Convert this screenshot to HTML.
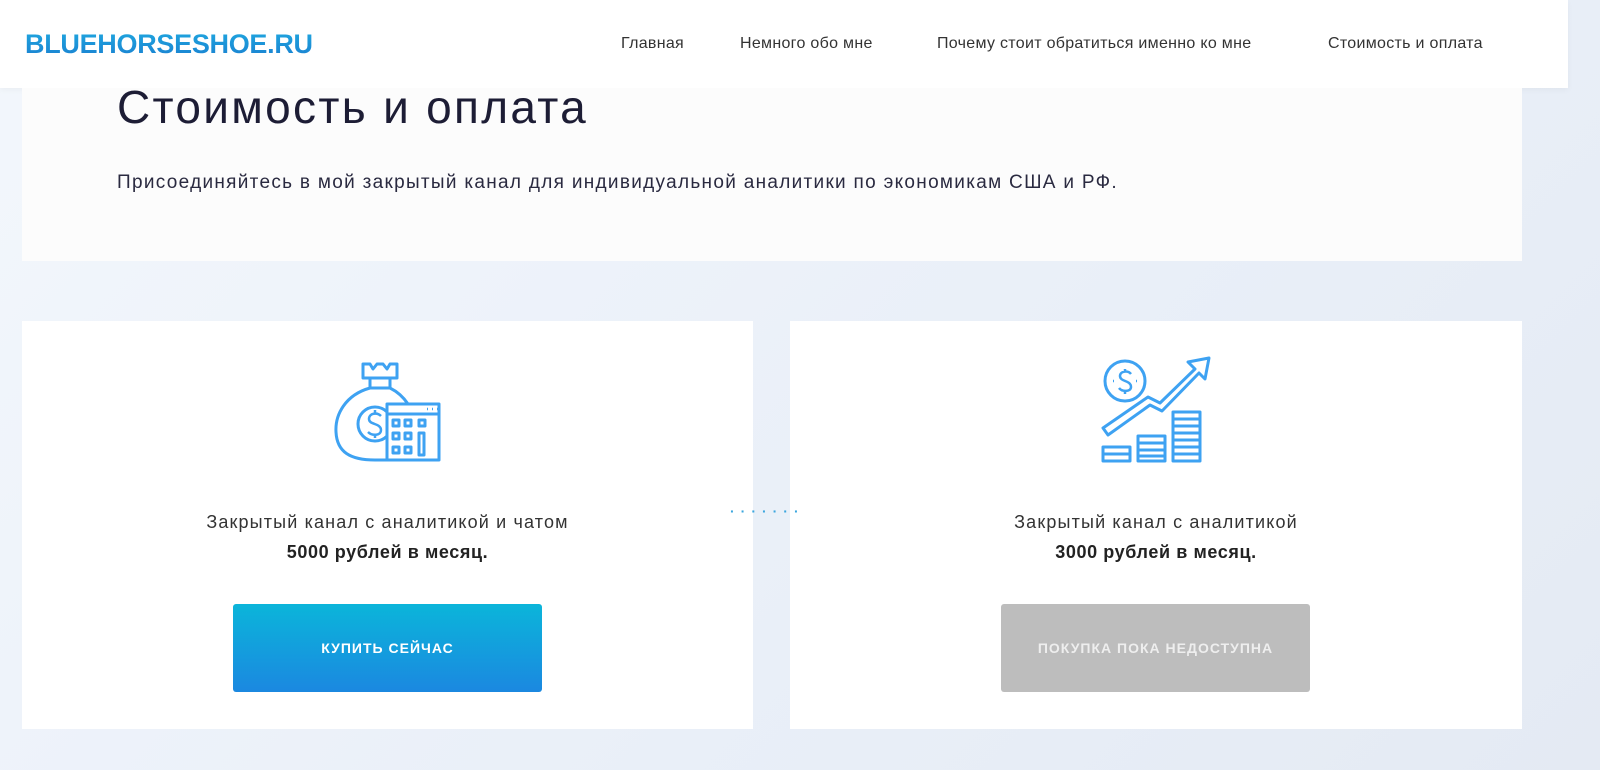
<!DOCTYPE html>
<html><head><meta charset="utf-8"><style>
*{margin:0;padding:0;box-sizing:border-box}
body{width:1600px;height:770px;overflow:hidden;font-family:"Liberation Sans",sans-serif;background:linear-gradient(135deg,#f3f7fc 0%,#e9eff8 60%,#e4eaf3 100%);position:relative;color:#222}
.hdr{position:absolute;left:0;top:0;width:1568px;height:88px;background:#fff;box-shadow:0 2px 6px rgba(0,0,0,.04)}
.logo{position:absolute;left:25px;top:29px;font-size:27px;font-weight:bold;letter-spacing:-0.3px;background:linear-gradient(#1fa8e0,#1a7fd0);-webkit-background-clip:text;color:transparent}
.nav{position:absolute;top:35px;font-size:16px;color:#333;letter-spacing:0.3px}
.top{position:absolute;left:22px;top:88px;width:1500px;height:173px;background:#fcfcfc}
h1{position:absolute;left:117px;top:80px;font-size:46px;font-weight:normal;color:#1d1d35;letter-spacing:2.3px}
.sub{position:absolute;left:117px;top:172px;font-size:19px;color:#2a2a40;letter-spacing:1.3px}
.card{position:absolute;top:321px;height:408px;background:#fff}
.t{position:absolute;width:100%;text-align:center;font-size:18px;color:#333;letter-spacing:1.15px}
.b{font-weight:bold;color:#222;font-size:18px;letter-spacing:0.6px}
.btn{position:absolute;width:309px;height:88px;border-radius:3px;color:#fff;font-size:14px;font-weight:bold;letter-spacing:1px;text-align:center;line-height:88px}
</style></head><body>
<div class="hdr">
<div class="logo">BLUEHORSESHOE.RU</div>
<div class="nav" style="left:621px">Главная</div>
<div class="nav" style="left:740px">Немного обо мне</div>
<div class="nav" style="left:937px">Почему стоит обратиться именно ко мне</div>
<div class="nav" style="left:1328px">Стоимость и оплата</div>
</div>
<div class="top"></div>
<h1>Стоимость и оплата</h1>
<div class="sub">Присоединяйтесь в мой закрытый канал для индивидуальной аналитики по экономикам США и РФ.</div>

<div class="card" style="left:22px;width:731px">
<div class="t" style="top:191px">Закрытый канал с аналитикой и чатом</div>
<div class="t b" style="top:221px">5000 рублей в месяц.</div>
<div class="btn" style="left:211px;top:283px;background:linear-gradient(#0bb5da,#1b88e0)">КУПИТЬ СЕЙЧАС</div>
</div>
<div class="card" style="left:790px;width:732px">
<div class="t" style="top:191px">Закрытый канал с аналитикой</div>
<div class="t b" style="top:221px">3000 рублей в месяц.</div>
<div class="btn" style="left:211px;top:283px;background:#bdbdbd;color:#eee">ПОКУПКА ПОКА НЕДОСТУПНА</div>
</div>
<div style="position:absolute;left:730px;top:503px;color:#3aa6de;font-size:14px;letter-spacing:6px;font-weight:bold">·······</div>

<svg style="position:absolute;left:320px;top:340px" width="140" height="130" viewBox="320 340 140 130" fill="none" stroke="#3ea2f2" stroke-width="3" stroke-linejoin="round">
<path d="M363 364 L363 378 L397 378 L397 364 L390 364 L387 369 L383 364 L377 364 L373 369 L370 364 Z"/>
<path d="M370 378 L370 388 L390 388 L390 378"/>
<path d="M370 388 C345 395 335 415 336 432 C337 452 350 460 375 460 L398 460"/>
<path d="M390 388 C398 392 404 398 408 404"/>
<circle cx="375" cy="424" r="17"/>
<path d="M381 416 C377 412 369 413 369 419 C369 425 381 423 381 430 C381 436 372 436 368 432 M375 410 V414 M375 434 V438" stroke-width="2.5"/>
<rect x="387" y="404" width="52" height="56" fill="#fff"/>
<path d="M387 414 H439"/>
<path d="M427 409 h1 M432 409 h1 M437 409 h1" stroke-width="2.5"/>
<rect x="393" y="420" width="6" height="6"/><rect x="405" y="420" width="6" height="6"/><rect x="419" y="420" width="6" height="6"/>
<rect x="393" y="433" width="6" height="6"/><rect x="405" y="433" width="6" height="6"/><rect x="419" y="433" width="5" height="22"/>
<rect x="393" y="447" width="6" height="6"/><rect x="405" y="447" width="6" height="6"/>
</svg>

<svg style="position:absolute;left:1090px;top:340px" width="140" height="130" viewBox="1090 340 140 130" fill="none" stroke="#3ea2f2" stroke-width="3" stroke-linejoin="round">
<circle cx="1125" cy="381" r="20"/>
<path d="M1131 374 C1128 370 1120 371 1120 376 C1120 382 1131 380 1131 387 C1131 392 1122 392 1119 388 M1125 369 V372 M1125 390 V394 M1113 381 h1 M1136 381 h1" stroke-width="2.5"/>
<path d="M1103 428 L1148 397 L1160 403 L1195 369 L1188 362 L1209 358 L1205 379 L1199 373 L1162 411 L1150 405 L1108 435 Z"/>
<path d="M1103 447 H1130 V461 H1103 Z M1103 454 H1130"/>
<path d="M1138 436 H1165 V461 H1138 Z M1138 443 H1165 M1138 450 H1165 M1138 456 H1165"/>
<path d="M1173 412 H1200 V461 H1173 Z M1173 419 H1200 M1173 426 H1200 M1173 433 H1200 M1173 440 H1200 M1173 447 H1200 M1173 454 H1200"/>
</svg>
</body></html>
